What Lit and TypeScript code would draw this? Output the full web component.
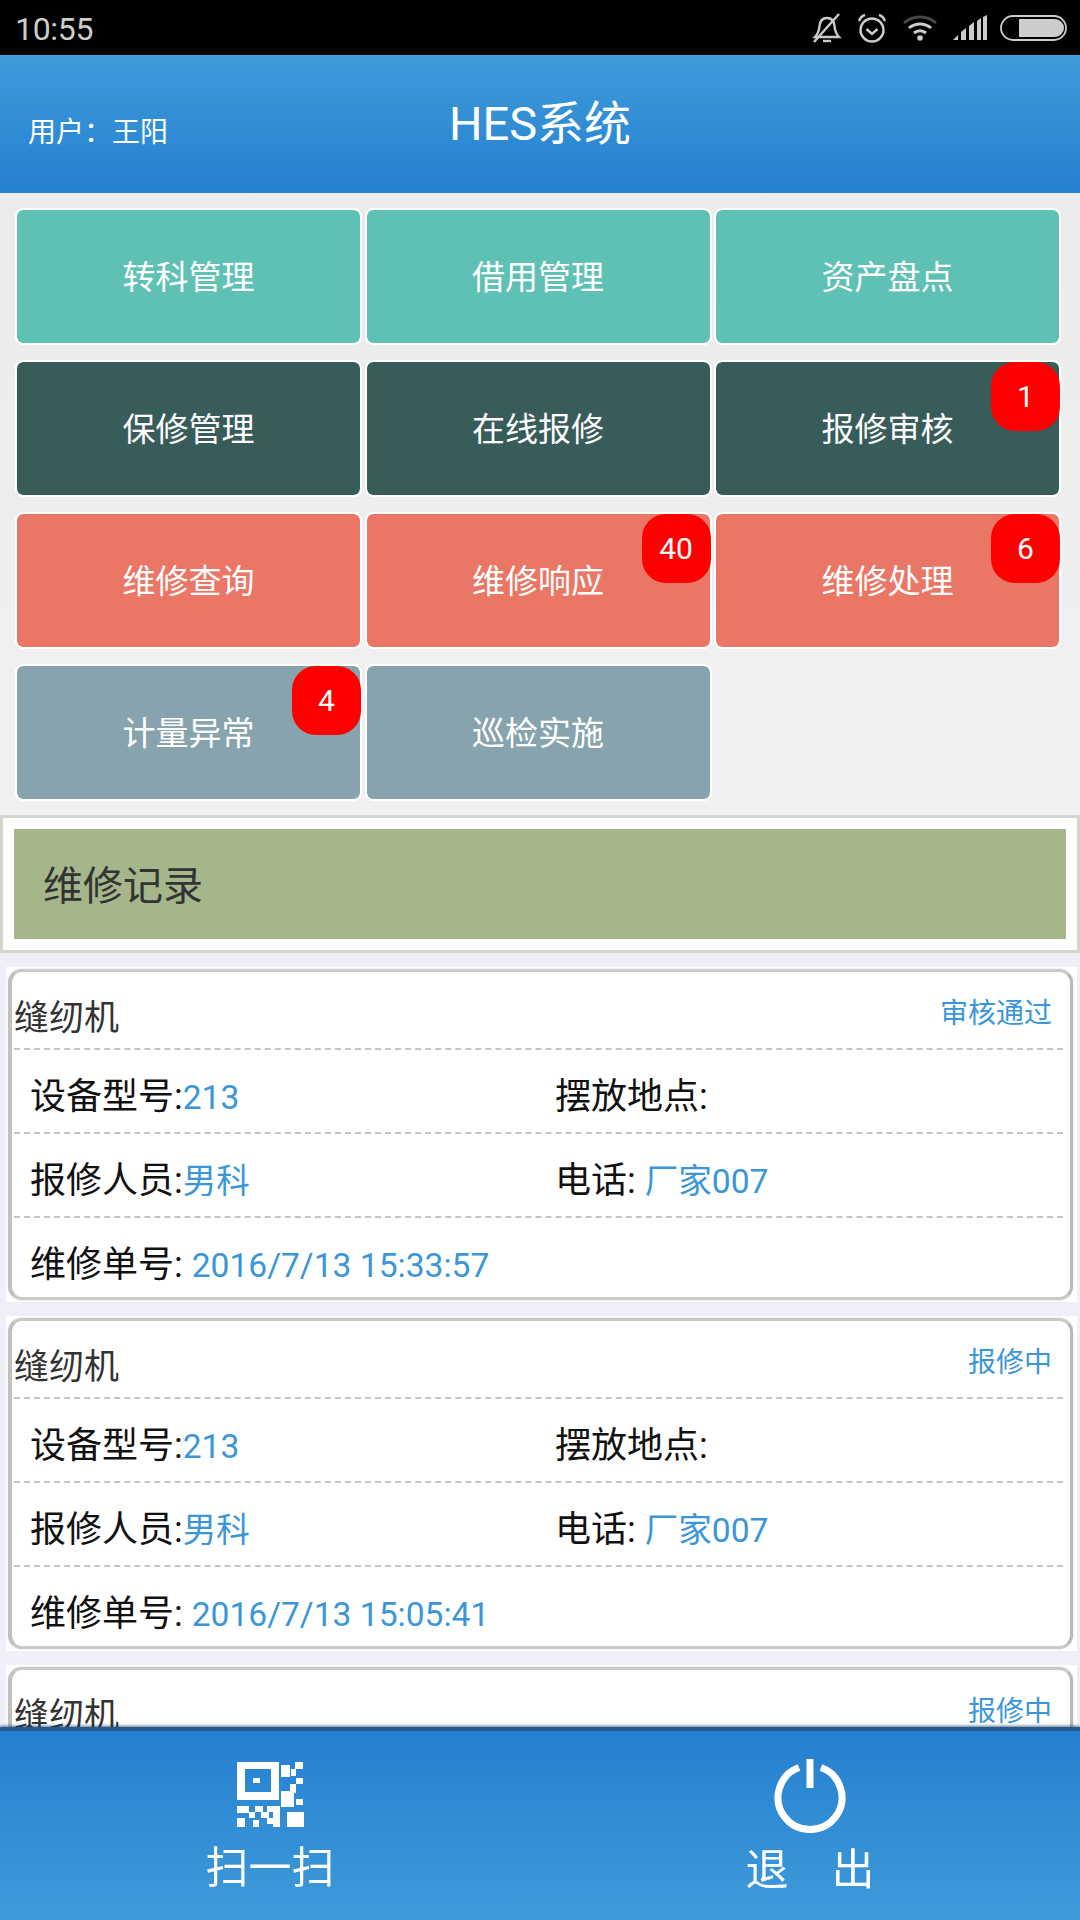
import { LitElement, html, css, svg } from "lit";
import { customElement } from "lit/decorators.js";

const TILES: { label: string; tone: string; badge?: string }[] = [
  { label: "转科管理", tone: "teal" },
  { label: "借用管理", tone: "teal" },
  { label: "资产盘点", tone: "teal" },
  { label: "保修管理", tone: "dark" },
  { label: "在线报修", tone: "dark" },
  { label: "报修审核", tone: "dark", badge: "1" },
  { label: "维修查询", tone: "coral" },
  { label: "维修响应", tone: "coral", badge: "40" },
  { label: "维修处理", tone: "coral", badge: "6" },
  { label: "计量异常", tone: "slate", badge: "4" },
  { label: "巡检实施", tone: "slate" },
];

const RECORDS = [
  { status: "审核通过", time: "2016/7/13 15:33:57" },
  { status: "报修中", time: "2016/7/13 15:05:41" },
  { status: "报修中", time: "" },
];

const qrCells: [number, number, number, number][] = [
  [44, 3, 9, 12], [58, 0, 8, 7], [54, 7, 5, 7], [59, 16, 7, 6],
  [44, 29, 13, 16], [53, 22, 6, 9], [59, 37, 7, 6], [50, 50, 17, 15],
  [0, 44, 12, 7], [18, 44, 8, 6], [30, 44, 12, 6], [36, 44, 7, 21],
  [0, 56, 8, 9], [12, 50, 6, 6], [16, 58, 6, 7], [24, 50, 8, 6], [30, 56, 8, 6],
];

@customElement("app-root")
export class AppRoot extends LitElement {
  static styles = css`
    :host {
      display: block;
      width: 1080px;
      height: 1920px;
      font-family: "Roboto", "Noto Sans CJK SC", sans-serif;
    }
    .page { display: flex; flex-direction: column; height: 1920px; overflow: hidden; }
    .status {
      height: 55px; flex: none; background: #000; color: #ccc;
      display: flex; align-items: center; justify-content: space-between;
      padding: 0 13px 0 15px; box-sizing: border-box;
    }
    .time { font-size: 32px; letter-spacing: -0.3px; line-height: 55px; padding-top: 3px; }
    .sicons { display: flex; align-items: center; }
    .sicons svg { display: block; fill: none; stroke: #ccc; }
    .header {
      height: 138px; flex: none; position: relative; box-sizing: border-box;
      background: linear-gradient(#3f9bd9, #2480d0); color: #fff;
      display: flex; align-items: center; justify-content: center;
    }
    .title { font-size: 47px; line-height: 1; margin-top: -1px; }
    .user { position: absolute; left: 28px; top: 58px; font-size: 28px; line-height: 40px; }
    .scroll { flex: 1; min-height: 0; overflow: hidden; background: #eeeff7; }
    .grid-wrap { background: linear-gradient(#ebebeb, #f1f1f1); padding: 15px 15px 14px; }
    .grid { display: grid; grid-template-columns: repeat(3, 347px); column-gap: 2.5px; row-gap: 15px; grid-auto-rows: 137px; }
    .tile {
      position: relative; box-sizing: border-box; border: 2px solid #fff; border-radius: 8px;
      display: flex; align-items: center; justify-content: center;
      color: #fff; font-size: 33px; background-clip: padding-box; padding-bottom: 3px;
    }
    .teal { background-color: #5fc1b3; }
    .dark { background-color: #385c5a; }
    .coral { background-color: #ea7766; }
    .slate { background-color: #87a4ae; }
    .badge {
      position: absolute; top: 0; right: -1px; width: 69px; height: 69px; border-radius: 24px;
      background: #f00; color: #fff; font-size: 30px;
      display: flex; align-items: center; justify-content: center;
    }
    .panel { box-sizing: border-box; height: 138px; border: 3px solid #d5d5d0; background: #fff; padding: 11px; }
    .panel-in {
      box-sizing: border-box; height: 110px; background: #a4b68a; color: #333; font-size: 40px;
      padding: 0 0 2px 29px; display: flex; align-items: center;
    }
    .list { display: flex; flex-direction: column; gap: 14px; padding: 14px 3px 0 6px; }
    .strip { background: #fff; padding: 2px 4px 2px 2px; }
    .card {
      box-sizing: border-box; height: 331px; border: 3px solid #c9c9c9; border-left: 4px solid #c0c0c0; border-right: 3px solid #b9b9b9;
      border-radius: 14px; background: #fff; padding: 0 7px 0 2px;
      box-shadow: 0 0 2px rgba(0, 0, 0, .18);
    }
    .card-head {
      height: 76px; display: flex; justify-content: space-between; align-items: flex-start;
      border-bottom: 2px dashed #c4c4c4; box-sizing: content-box;
    }
    .name { font-size: 35px; color: #333; line-height: 44px; margin-top: 25px; }
    .state { font-size: 28px; color: #3a96d8; line-height: 40px; margin-top: 22px; margin-right: 11px; }
    .row {
      height: 78px; display: flex; align-items: center; padding: 4px 0 0 16px; font-size: 36px; color: #111;
      border-bottom: 2px dashed #c4c4c4;
    }
    .row:last-child { border-bottom: none; }
    .cell { width: 525px; flex: none; white-space: pre; }
    .val { color: #3a96d8; font-size: 33.6px; }
    .footer {
      height: 193px; flex: none; box-sizing: border-box; position: relative;
      background: linear-gradient(#2480d0, #3f9bd9); color: #fff;
      display: grid; grid-template-columns: 540px 540px;
      box-shadow: 0 -1px 3px rgba(20, 50, 90, .7);
      border-top: 4px solid #245a8e;
    }
    .act { display: flex; flex-direction: column; align-items: center; }
    .act svg { display: block; fill: #fff; }
    .lbl { font-size: 43px; line-height: 50px; filter: blur(0.5px); }
    .scan svg { margin-top: 31px; margin-left: 1px; }
    .scan .lbl { margin-top: 16px; }
    .off svg { margin-top: 28px; }
    .off .lbl { margin-top: 12px; white-space: pre; }
  `;

  private statusIcons() {
    return html`<div class="sicons">
      <svg width="30" height="32" viewBox="0 0 30 32" stroke-width="2.4" style="margin-right:14px">
        <path d="M3 25h24c-3-3-4-6-4.500-11-.5-5-3-8-7.500-8s-7 3-7.500 8C7 19 6 22 3 25z" />
        <path d="M11 29h8" />
        <path d="M2 30 27 2" />
      </svg>
      <svg width="32" height="32" viewBox="0 0 32 32" stroke-width="2.4" style="margin-right:14px">
        <circle cx="16" cy="18" r="11.500" />
        <path d="M10.500 17l5.500 5 5.500-5" />
        <path d="M3 9c1-3 3-5 6-6M29 9c-1-3-3-5-6-6" />
      </svg>
      <svg width="36" height="28" viewBox="0 0 36 28" style="margin-right:15px">
        <path d="M2 9c9-8 23-8 32 0" stroke="#444" stroke-width="3" />
        <path d="M7 14c6-5.500 16-5.500 22 0M12 19c3.500-3 8.500-3 12 0" stroke-width="3" />
        <circle cx="18" cy="24" r="2.800" fill="#ccc" stroke="none" />
      </svg>
      <svg width="35" height="26" viewBox="0 0 35 26" style="margin-right:12px">
        <path fill="#ccc" stroke="none" d="M0 25 5 20v5zM8 25v-8l5-4v12zM16 25V11l5-4v18zM24 25V6l4-3v22zM30 25V2l4-2v25z" />
      </svg>
      <svg width="67" height="26" viewBox="0 0 67 26" stroke-width="1.800">
        <rect x="1" y="1" width="65" height="24" rx="12" />
        <path fill="#ccc" stroke="none" d="M19 4h36a9 9 0 0 1 0 18H19z" />
      </svg>
    </div>`;
  }

  private qr() {
    return html`<svg width="67" height="65" viewBox="0 0 67 65">
      <path fill-rule="evenodd" d="M0 0h42v38H0zM8 7v23h26V7z" />
      <rect x="16" y="16" width="7" height="5" />
      ${qrCells.map(([x, y, w, h]) => svg`<rect x=${x} y=${y} width=${w} height=${h} />`)}
    </svg>`;
  }

  private power() {
    return html`<svg width="74" height="74" viewBox="0 0 74 74">
      <path fill="none" stroke="#fff" stroke-width="7" d="M26 8.500a32 32 0 1 0 22 0" />
      <rect x="33.500" y="0" width="7" height="29" />
    </svg>`;
  }

  render() {
    return html`<div class="page">
      <div class="status"><span class="time">10:55</span>${this.statusIcons()}</div>
      <div class="header">
        <div class="user">用户：王阳</div>
        <div class="title">HES系统</div>
      </div>
      <div class="scroll">
        <div class="grid-wrap">
          <div class="grid">
            ${TILES.map(
              (t) => html`<div class="tile ${t.tone}">
                ${t.label}${t.badge ? html`<span class="badge">${t.badge}</span>` : ""}
              </div>`
            )}
          </div>
        </div>
        <div class="panel"><div class="panel-in">维修记录</div></div>
        <div class="list">
          ${RECORDS.map(
            (r) => html`<div class="strip">
              <div class="card">
                <div class="card-head"><span class="name">缝纫机</span><span class="state">${r.status}</span></div>
                <div class="row">
                  <span class="cell">设备型号:<span class="val">213</span></span>
                  <span>摆放地点:</span>
                </div>
                <div class="row">
                  <span class="cell">报修人员:<span class="val">男科</span></span>
                  <span>电话: <span class="val">厂家007</span></span>
                </div>
                <div class="row">
                  <span>维修单号: <span class="val">${r.time}</span></span>
                </div>
              </div>
            </div>`
          )}
        </div>
      </div>
      <div class="footer">
        <div class="act scan">${this.qr()}<div class="lbl">扫一扫</div></div>
        <div class="act off">${this.power()}<div class="lbl">退　出</div></div>
      </div>
    </div>`;
  }
}
